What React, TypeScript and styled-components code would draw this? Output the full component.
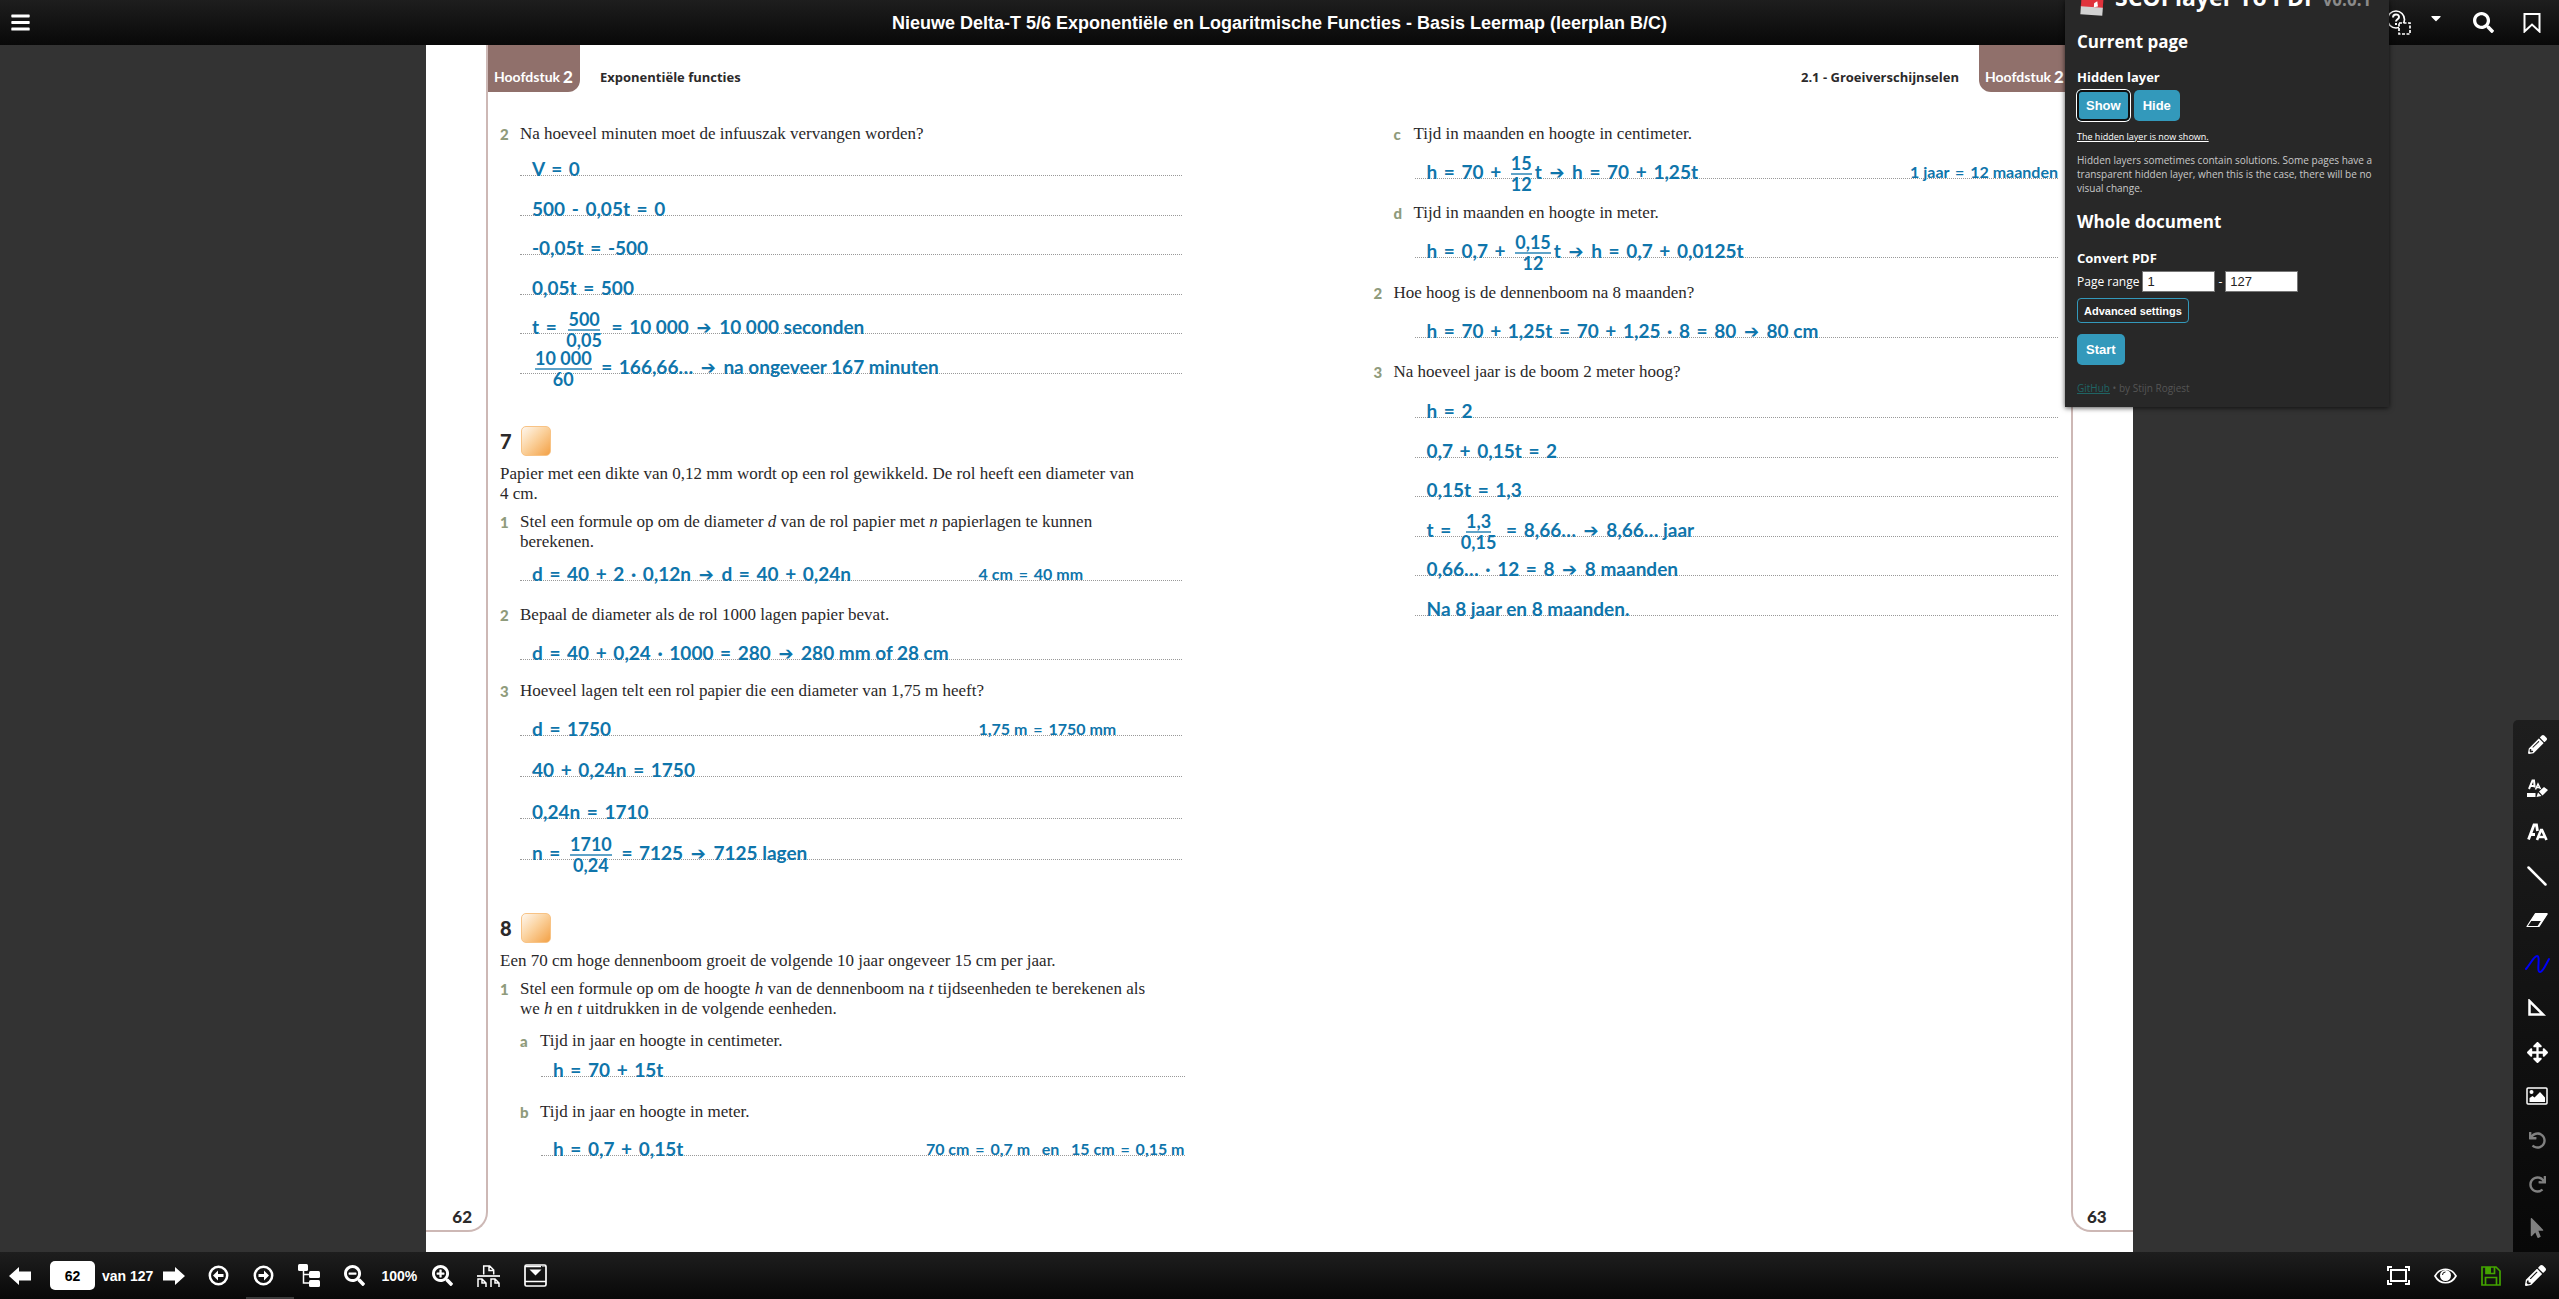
import React from "react";
import styled, { createGlobalStyle } from "styled-components";
import {
  FaArrowsAlt,
  FaBars,
  FaCaretDown,
  FaMousePointer,
  FaPencilAlt,
  FaRedo,
  FaSearch,
  FaSearchMinus,
  FaSearchPlus,
  FaUndo,
} from "react-icons/fa";

const GlobalStyle = createGlobalStyle`
  *, *::before, *::after { box-sizing: border-box; }
  body { margin: 0; background: #333; font-family: "Liberation Sans", Arial, sans-serif; }
  h1, h2, h3, p { margin: 0; }
`;

const ui = `"Open Sans", "Noto Sans", sans-serif`;
const hand = `Lato, "DejaVu Sans", sans-serif`;
const book = `"Liberation Serif", "Times New Roman", serif`;

/* ---------- Application shell ---------- */

const Shell = styled.div`
  display: flex;
  flex-direction: column;
  min-height: 100vh;
  position: relative;
  overflow: hidden;
`;

const TopBar = styled.header`
  display: grid;
  grid-template-columns: 1fr auto 1fr;
  align-items: center;
  height: 45px;
  background: linear-gradient(#1e1e1e, #080808);
  color: #fff;
`;

const Title = styled.h1`
  font-size: 18px;
  line-height: 20px;
  font-weight: 700;
`;

const Cluster = styled.div<{ $gap: number }>`
  display: flex;
  align-items: center;
  gap: ${(p) => p.$gap}px;
`;

const MenuCluster = styled(Cluster)`
  padding-left: 10px;
`;

const ToolCluster = styled(Cluster)`
  justify-content: flex-end;
  padding-right: 18px;
`;

const IconButton = styled.button<{ $color?: string }>`
  display: inline-flex;
  align-items: center;
  justify-content: center;
  padding: 0;
  border: 0;
  background: none;
  color: ${(p) => p.$color || "#fff"};
`;

const CaretButton = styled(IconButton)`
  padding-bottom: 10px;
`;

const Stage = styled.main`
  flex: 1;
  display: flex;
  justify-content: center;
  position: relative;
`;

const Spread = styled.div`
  display: flex;
  width: 67%;
  max-width: 1707px;
  background: #fff;
`;

/* ---------- Book pages ---------- */

const Page = styled.section`
  flex: 1;
  display: flex;
  min-width: 0;
  padding-bottom: 20px;
`;

const Margin = styled.div<{ $side: "left" | "right" }>`
  display: flex;
  align-items: flex-end;
  width: 62px;
  flex: none;
  padding: 0 14px 3px;
  justify-content: ${(p) => (p.$side === "left" ? "flex-end" : "flex-start")};
  border: 0 solid #cdb8b5;
  border-bottom-width: 2px;
  ${(p) =>
    p.$side === "left"
      ? "border-right-width: 2px; border-bottom-right-radius: 20px;"
      : "border-left-width: 2px; border-bottom-left-radius: 20px;"}
  font: 900 17px/20px ${hand};
  color: #2c2a2b;
`;

const Column = styled.div`
  flex: 1;
  min-width: 0;
`;

const PageHead = styled.div<{ $end?: boolean }>`
  display: flex;
  align-items: flex-end;
  height: 47px;
  gap: 20px;
  justify-content: ${(p) => (p.$end ? "flex-end" : "flex-start")};
  color: #2c2a2b;
`;

const HeadTitle = styled.h2`
  font: 700 13px/20px ${ui};
  padding-bottom: 5px;
`;

const ChapterTab = styled.div<{ $side: "left" | "right" }>`
  display: flex;
  align-items: flex-end;
  gap: 3px;
  width: 92px;
  height: 47px;
  padding: 0 6px 5px;
  background: #90706b;
  color: #fff;
  font: 700 14px/20px ${hand};
  white-space: nowrap;
  border-radius: ${(p) => (p.$side === "left" ? "0 0 12px 0" : "0 0 0 12px")};
`;

const ChapterNumber = styled.span`
  font-size: 17px;
  font-weight: 900;
`;

const LeftBody = styled.div`
  display: flex;
  flex-direction: column;
  padding: 0 98px 0 12px;
`;

const RightBody = styled.div`
  display: flex;
  flex-direction: column;
  padding: 0 13px 0 94px;
`;

const Paragraph = styled.p<{ $top: number }>`
  margin-top: ${(p) => p.$top}px;
  font: 400 17px/20px ${book};
  color: #2a2829;
  white-space: pre-line;
`;

const Row = styled.div<{ $top: number; $indent?: number }>`
  display: flex;
  margin-top: ${(p) => p.$top}px;
  padding-left: ${(p) => p.$indent || 0}px;
`;

const Marker = styled.span`
  width: 20px;
  flex: none;
  font: 900 15px/20px ${hand};
  color: #8f9b7c;
`;

const ExerciseHead = styled.div<{ $top: number }>`
  display: flex;
  align-items: center;
  gap: 9px;
  height: 30px;
  margin-top: ${(p) => p.$top}px;
  font: 900 20px/30px ${hand};
  color: #2c2a2b;
`;

const Level = styled.span`
  width: 30px;
  height: 30px;
  border: 1px solid #f8c385;
  border-radius: 5px;
  background: linear-gradient(135deg, #fef3e6 5%, #fbd3a0 45%, #f3a146 100%);
`;

const Answers = styled.div<{ $top: number; $height?: number; $indent: number; $wide?: boolean }>`
  display: flex;
  flex-direction: column;
  justify-content: space-between;
  height: ${(p) => p.$height || 20}px;
  margin: ${(p) => p.$top}px ${(p) => (p.$wide ? -3 : 0)}px 0 ${(p) => p.$indent}px;
`;

const Line = styled.div`
  display: flex;
  justify-content: space-between;
  height: 20px;
  padding: 3px 0 0 12px;
  border-bottom: 1px dotted #999;
  font: 700 19px/20px ${hand};
  color: #0f75ab;
  white-space: nowrap;
`;

const Expression = styled.span`
  height: 20px;
`;

const Note = styled.span<{ $width?: number }>`
  width: ${(p) => (p.$width ? p.$width + "px" : "auto")};
  height: 20px;
  font-size: 16px;
`;

const Operator = styled.span`
  margin: 0 2px;
`;

const Arrow = styled.span`
  margin: 0 3px;
  font: 700 18px/16px "DejaVu Sans", sans-serif;
`;

const Fraction = styled.span`
  display: inline-flex;
  flex-direction: column;
  align-items: center;
  vertical-align: middle;
  margin: -11px 3px;
  font-size: 18px;
`;

const Numerator = styled.span`
  line-height: 19px;
  border-bottom: 2px solid #5fa3c8;
`;

const Denominator = styled.span`
  line-height: 19px;
`;

/* Writes out a formula; {a/b} is a stacked fraction. */
function Formula({ text }: { text: string }) {
  const parts = text.split(/(\{[^}]+\}|[=+·→]| - )/);
  return (
    <>
      {parts.map((part, i) => {
        if (part.startsWith("{")) {
          const [top, bottom] = part.slice(1, -1).split("/");
          return (
            <Fraction key={i}>
              <Numerator>{top}</Numerator>
              <Denominator>{bottom}</Denominator>
            </Fraction>
          );
        }
        if (part === "→") return <Arrow key={i}>➔</Arrow>;
        if (/^([=+·]| - )$/.test(part)) return <Operator key={i}>{part}</Operator>;
        return part;
      })}
    </>
  );
}

type AnswerLine = { text: string; note?: string; noteWidth?: number };

function AnswerBlock(props: {
  top: number;
  indent: number;
  height?: number;
  wide?: boolean;
  lines: AnswerLine[];
}) {
  return (
    <Answers $top={props.top} $indent={props.indent} $height={props.height} $wide={props.wide}>
      {props.lines.map((line) => (
        <Line key={line.text}>
          <Expression>
            <Formula text={line.text} />
          </Expression>
          {line.note && (
            <Note $width={line.noteWidth}>
              <Formula text={line.note} />
            </Note>
          )}
        </Line>
      ))}
    </Answers>
  );
}

function Question(props: { top: number; mark: string; indent?: number; children: React.ReactNode }) {
  return (
    <Row $top={props.top} $indent={props.indent}>
      <Marker>{props.mark}</Marker>
      <Paragraph $top={0}>{props.children}</Paragraph>
    </Row>
  );
}

function LeftPage() {
  return (
    <Page>
      <Margin $side="left">62</Margin>
      <Column>
        <PageHead>
          <ChapterTab $side="left">
            Hoofdstuk <ChapterNumber>2</ChapterNumber>
          </ChapterTab>
          <HeadTitle>Exponentiële functies</HeadTitle>
        </PageHead>
        <LeftBody>
          <Question top={32} mark="2">
            Na hoeveel minuten moet de infuuszak vervangen worden?
          </Question>
          <AnswerBlock
            top={12}
            indent={20}
            height={218}
            lines={[
              { text: "V = 0" },
              { text: "500 - 0,05t = 0" },
              { text: "-0,05t = -500" },
              { text: "0,05t = 500" },
              { text: "t = {500/0,05} = 10 000 → 10 000 seconden" },
              { text: "{10 000/60} = 166,66… → na ongeveer 167 minuten" },
            ]}
          />
          <ExerciseHead $top={52}>
            7 <Level />
          </ExerciseHead>
          <Paragraph $top={8}>
            {"Papier met een dikte van 0,12 mm wordt op een rol gewikkeld. De rol heeft een diameter van\n4 cm."}
          </Paragraph>
          <Question top={8} mark="1">
            Stel een formule op om de diameter <i>d</i> van de rol papier met <i>n</i> papierlagen te kunnen
            {"\n"}berekenen.
          </Question>
          <AnswerBlock
            top={9}
            indent={20}
            lines={[{ text: "d = 40 + 2 · 0,12n → d = 40 + 0,24n", note: "4 cm = 40 mm", noteWidth: 203 }]}
          />
          <Question top={24} mark="2">
            Bepaal de diameter als de rol 1000 lagen papier bevat.
          </Question>
          <AnswerBlock
            top={15}
            indent={20}
            lines={[{ text: "d = 40 + 0,24 · 1000 = 280 → 280 mm of 28 cm" }]}
          />
          <Question top={21} mark="3">
            Hoeveel lagen telt een rol papier die een diameter van 1,75 m heeft?
          </Question>
          <AnswerBlock
            top={15}
            indent={20}
            height={144}
            lines={[
              { text: "d = 1750", note: "1,75 m = 1750 mm", noteWidth: 203 },
              { text: "40 + 0,24n = 1750" },
              { text: "0,24n = 1710" },
              { text: "n = {1710/0,24} = 7125 → 7125 lagen" },
            ]}
          />
          <ExerciseHead $top={53}>
            8 <Level />
          </ExerciseHead>
          <Paragraph $top={8}>
            Een 70 cm hoge dennenboom groeit de volgende 10 jaar ongeveer 15 cm per jaar.
          </Paragraph>
          <Question top={8} mark="1">
            Stel een formule op om de hoogte <i>h</i> van de dennenboom na <i>t</i> tijdseenheden te berekenen als
            {"\n"}we <i>h</i> en <i>t</i> uitdrukken in de volgende eenheden.
          </Question>
          <Question top={12} mark="a" indent={20}>
            Tijd in jaar en hoogte in centimeter.
          </Question>
          <AnswerBlock top={6} indent={41} wide lines={[{ text: "h = 70 + 15t" }]} />
          <Question top={25} mark="b" indent={20}>
            Tijd in jaar en hoogte in meter.
          </Question>
          <AnswerBlock
            top={14}
            indent={41}
            wide
            lines={[{ text: "h = 0,7 + 0,15t", note: "70 cm = 0,7 m \u00a0 en \u00a0 15 cm = 0,15 m" }]}
          />
        </LeftBody>
      </Column>
    </Page>
  );
}

function RightPage() {
  return (
    <Page>
      <Column>
        <PageHead $end>
          <HeadTitle>2.1 - Groeiverschijnselen</HeadTitle>
          <ChapterTab $side="right">
            Hoofdstuk <ChapterNumber>2</ChapterNumber>
          </ChapterTab>
        </PageHead>
        <RightBody>
          <Question top={32} mark="c" indent={20}>
            Tijd in maanden en hoogte in centimeter.
          </Question>
          <AnswerBlock
            top={15}
            indent={41}
            lines={[{ text: "h = 70 + {15/12}t → h = 70 + 1,25t", note: "1 jaar = 12 maanden" }]}
          />
          <Question top={24} mark="d" indent={20}>
            Tijd in maanden en hoogte in meter.
          </Question>
          <AnswerBlock top={15} indent={41} lines={[{ text: "h = 0,7 + {0,15/12}t → h = 0,7 + 0,0125t" }]} />
          <Question top={25} mark="2">
            Hoe hoog is de dennenboom na 8 maanden?
          </Question>
          <AnswerBlock
            top={15}
            indent={41}
            lines={[{ text: "h = 70 + 1,25t = 70 + 1,25 · 8 = 80 → 80 cm" }]}
          />
          <Question top={24} mark="3">
            Na hoeveel jaar is de boom 2 meter hoog?
          </Question>
          <AnswerBlock
            top={16}
            indent={41}
            height={218}
            lines={[
              { text: "h = 2" },
              { text: "0,7 + 0,15t = 2" },
              { text: "0,15t = 1,3" },
              { text: "t = {1,3/0,15} = 8,66… → 8,66… jaar" },
              { text: "0,66… · 12 = 8 → 8 maanden" },
              { text: "Na 8 jaar en 8 maanden." },
            ]}
          />
        </RightBody>
      </Column>
      <Margin $side="right">63</Margin>
    </Page>
  );
}

/* ---------- Extension popup ---------- */

const Popup = styled.aside`
  position: absolute;
  top: 0;
  right: 170px;
  z-index: 3;
  display: flex;
  flex-direction: column;
  align-items: flex-start;
  width: 324px;
  padding: 0 12px 10px;
  overflow: hidden;
  background: #282828;
  color: #fff;
  font-family: ${ui};
  box-shadow: 0 1px 5px rgba(0, 0, 0, 0.7);
`;

const PopupTitle = styled.h2`
  display: flex;
  align-items: baseline;
  margin-top: -20px;
  font-size: 23px;
  line-height: 34px;
  white-space: nowrap;
`;

const Version = styled.span`
  margin-left: 6px;
  font-size: 17px;
  color: #8a8a8a;
`;

const LogoBox = styled.span`
  display: flex;
  width: 38px;
  padding-left: 3px;
  align-self: flex-end;
`;

const PopupHeading = styled.h2<{ $top: number }>`
  margin-top: ${(p) => p.$top}px;
  font-size: 17px;
  line-height: 24px;
`;

const PopupSubheading = styled.h3<{ $top: number }>`
  margin-top: ${(p) => p.$top}px;
  font-size: 13px;
  line-height: 18px;
`;

const PopupRow = styled.div<{ $top: number }>`
  display: flex;
  align-items: center;
  gap: 3px;
  margin-top: ${(p) => p.$top}px;
  font-size: 12px;
`;

const ActionButton = styled.button<{ $focus?: boolean }>`
  height: 31px;
  padding: 0 9px;
  border: 0;
  border-radius: 5px;
  background: #3399bb;
  color: #fff;
  font: 700 13px/16px "Liberation Sans", Arial, sans-serif;
  ${(p) => p.$focus && "box-shadow: inset 0 0 0 2px #101010, 0 0 0 1px #fff; margin-right: 1px;"}
`;

const Status = styled.p`
  margin-top: 9px;
  font-size: 9px;
  line-height: 14px;
  text-decoration: underline;
`;

const Hint = styled.p`
  margin-top: 9px;
  font-size: 10px;
  line-height: 14px;
  color: #c8c8c8;
  white-space: pre;
`;

const RangeInput = styled.input`
  width: 73px;
  height: 21px;
  padding: 0 4px;
  border: 1px solid #767676;
  background: #fff;
  color: #222;
  font: 400 13px/16px "Liberation Sans", Arial, sans-serif;
`;

const OutlineButton = styled.button`
  height: 25px;
  margin-top: 6px;
  padding: 0 6px;
  border: 1px solid #3399bb;
  border-radius: 4px;
  background: none;
  color: #fff;
  font: 700 11px/14px "Liberation Sans", Arial, sans-serif;
`;

const StartButton = styled(ActionButton)`
  margin-top: 11px;
`;

const Credit = styled.p`
  margin-top: 14px;
  font-size: 10px;
  line-height: 18px;
  color: #555;
`;

const CreditLink = styled.a`
  color: #1f6464;
`;

function ExtensionPopup() {
  return (
    <Popup>
      <PopupTitle>
        <LogoBox>
          <svg width="24" height="24" viewBox="0 0 24 24">
            <g transform="rotate(4 12 12)">
              <rect x="1" y="0" width="22" height="15" fill="#e0333c" />
              <path d="M1 14h22v8H1z" fill="#d2d2d2" />
              <path d="M14 10l3-2 1 5-4 1z" fill="#fff" />
            </g>
          </svg>
        </LogoBox>
        SCOPlayer To PDF <Version>v0.0.1</Version>
      </PopupTitle>
      <PopupHeading $top={13}>Current page</PopupHeading>
      <PopupSubheading $top={14}>Hidden layer</PopupSubheading>
      <PopupRow $top={4}>
        <ActionButton $focus>Show</ActionButton>
        <ActionButton>Hide</ActionButton>
      </PopupRow>
      <Status>The hidden layer is now shown.</Status>
      <Hint>
        {"Hidden layers sometimes contain solutions. Some pages have a\ntransparent hidden layer, when this is the case, there will be no\nvisual change."}
      </Hint>
      <PopupHeading $top={15}>Whole document</PopupHeading>
      <PopupSubheading $top={15}>Convert PDF</PopupSubheading>
      <PopupRow $top={4}>
        <label htmlFor="range-from">Page range</label>
        <RangeInput id="range-from" defaultValue="1" />-
        <RangeInput aria-label="Page range end" defaultValue="127" />
      </PopupRow>
      <OutlineButton>Advanced settings</OutlineButton>
      <StartButton>Start</StartButton>
      <Credit>
        <CreditLink href="#github">GitHub</CreditLink> • by Stijn Rogiest
      </Credit>
    </Popup>
  );
}

/* ---------- Tool sidebar ---------- */

const Sidebar = styled.nav`
  position: absolute;
  right: 0;
  bottom: 0;
  display: flex;
  flex-direction: column;
  width: 46px;
  padding: 2px 0;
  border-top-left-radius: 5px;
  background: linear-gradient(#1e1e1e, #080808);
`;

const Tool = styled(IconButton)`
  height: 44px;
  padding-left: 2px;
`;

const Svg = ({ w, h, children }: { w: number; h: number; children: React.ReactNode }) => (
  <svg width={w} height={h} viewBox={`0 0 ${w} ${h}`} fill="none" stroke="currentColor">
    {children}
  </svg>
);

const LettersIcon = () => (
  <Svg w={21} h={18}>
    <path d="M1.500 16.500L7 2h2.500l1 6M4 11.500h4" strokeWidth="2.800" />
    <path d="M10 17l4-10h1l4.500 10M12 14h5.500" strokeWidth="2.600" />
  </Svg>
);

const MarkerIcon = () => (
  <Svg w={21} h={18}>
    <path d="M2 10L5.500 1.500h1.500l.7 7M3.500 7h4" strokeWidth="2" />
    <path d="M8.500 10.500L11 5l2.500 5M9.500 8.500h3" strokeWidth="1.500" />
    <path d="M0 14h8.500v4H0zM11 13.500l3.500 3.500-5 1zM12 12.500l5-4.500 4 3-5.500 5.500z" fill="currentColor" stroke="none" />
  </Svg>
);

const PictureIcon = () => (
  <Svg w={22} h={18}>
    <rect x="1" y="1" width="20" height="16" rx="1" strokeWidth="1.500" />
    <circle cx="5.500" cy="5" r="2" fill="currentColor" stroke="none" />
    <path d="M3.500 15v-4l3-2 2 1.500L14 5l5 5.500V15z" fill="currentColor" stroke="none" />
  </Svg>
);

const tools: { label: string; icon: React.ReactNode; color?: string }[] = [
  { label: "Potlood", icon: <FaPencilAlt size={19} /> },
  { label: "Tekst markeren", icon: <MarkerIcon /> },
  { label: "Tekst", icon: <LettersIcon /> },
  {
    label: "Lijn",
    icon: (
      <Svg w={20} h={20}>
        <path d="M1.500 1.500l17 17" strokeWidth="2.500" strokeLinecap="round" />
      </Svg>
    ),
  },
  {
    label: "Gom",
    icon: (
      <Svg w={22} h={16}>
        <path d="M9.500 1.500H21L12.500 14.500H1z" strokeWidth="1.200" strokeLinejoin="round" />
        <path d="M9.500 1.500H21L16 9H4.500z" fill="currentColor" stroke="none" />
        <path d="M12.500 14.500L21 1.500" strokeWidth="2" />
      </Svg>
    ),
  },
  {
    label: "Vrije lijn",
    color: "#0000f5",
    icon: (
      <Svg w={26} h={20}>
        <path d="M2 15C7 9 10 2 13 2c4 0-1 16 3 16 3 0 5-6 9-13" strokeWidth="2" strokeLinecap="round" />
      </Svg>
    ),
  },
  {
    label: "Geodriehoek",
    icon: (
      <Svg w={20} h={18}>
        <path d="M2.500 2v13.500h13.500z" strokeWidth="2.500" />
      </Svg>
    ),
  },
  { label: "Verplaatsen", icon: <FaArrowsAlt size={21} /> },
  { label: "Afbeelding", icon: <PictureIcon /> },
  { label: "Ongedaan maken", color: "#808080", icon: <FaUndo size={17} /> },
  { label: "Opnieuw", color: "#808080", icon: <FaRedo size={17} /> },
  { label: "Selecteren", color: "#808080", icon: <FaMousePointer size={20} /> },
];

/* ---------- Bottom bar ---------- */

const BottomBar = styled.footer`
  position: relative;
  display: flex;
  align-items: center;
  justify-content: space-between;
  height: 47px;
  padding: 0 13px 0 9px;
  background: linear-gradient(#1e1e1e, #080808);
  color: #fff;
  font-size: 14px;
  font-weight: 700;
  &::after {
    content: "";
    position: absolute;
    left: 246px;
    bottom: 0;
    width: 48px;
    height: 2px;
    background: #3a3a3a;
  }
`;

const PageInput = styled.input`
  width: 45px;
  height: 29px;
  margin: 0 7px 0 18px;
  padding: 0;
  border: 0;
  border-radius: 5px;
  background: #fff;
  color: #000;
  font: 700 14px/16px "Liberation Sans", Arial, sans-serif;
  text-align: center;
`;

const PageCount = styled.label`
  margin-right: 9px;
`;

const Controls = styled(Cluster)`
  margin-left: 23px;
`;

const Zoom = styled.span`
  width: 35px;
  margin: 0 -8px;
  text-align: center;
`;

const ArrowIcon = ({ flip }: { flip?: boolean }) => (
  <Svg w={23} h={18}>
    <path
      d={flip ? "M23 9L13 0v4.500H1v9h12V18z" : "M0 9L10 0v4.500h12v9H10V18z"}
      fill="currentColor"
      stroke="none"
    />
  </Svg>
);

const CircleArrow = ({ flip }: { flip?: boolean }) => (
  <Svg w={21} h={21}>
    <circle cx="10.500" cy="10.500" r="8.700" strokeWidth="2.500" />
    <path
      d={
        flip
          ? "M16 10.500L11 5.500v3.500H5.500v3H11v3.500z"
          : "M5 10.500L10 5.500v3.500h5.500v3H10v3.500z"
      }
      fill="currentColor"
      stroke="none"
    />
  </Svg>
);

const TreeIcon = () => (
  <Svg w={22} h={23}>
    <path d="M5.500 5v14H13M5.500 10.500H13" strokeWidth="1.500" />
    <g fill="currentColor" stroke="none">
      <rect x="0" y="0" width="10" height="7" rx="1.500" />
      <rect x="11" y="7" width="11" height="7" rx="1.500" />
      <rect x="11" y="16" width="11" height="7" rx="1.500" />
    </g>
  </Svg>
);

const PagesIcon = () => (
  <Svg w={23} h={22}>
    <path d="M0 11h23" strokeWidth="1.700" />
    <path
      d="M6.700 9.500V1h6l4 4v4.500M12 1v4.500h4.500M1 22v-8h4l4 4v4M5 14v4h4M14 22v-8h4l4 4v4M18 14v4h4"
      strokeWidth="1.500"
    />
  </Svg>
);

const PanelIcon = () => (
  <Svg w={23} h={23}>
    <rect x="1" y="1" width="21" height="21" rx="1.500" strokeWidth="1.700" />
    <path d="M1 2.500h16M1 17.500h21" strokeWidth="1.500" />
    <path d="M18.500 2.500h3" strokeWidth="1" strokeDasharray="1 1" />
    <path d="M5.500 5.500h12l-6 6z" fill="currentColor" stroke="none" />
  </Svg>
);

const FrameIcon = () => (
  <Svg w={23} h={19}>
    <rect x="4" y="4" width="15" height="11" strokeWidth="2" />
    <path d="M1 5V1h4M18 1h4v4M22 14v4h-4M5 18H1v-4" strokeWidth="2" />
  </Svg>
);

const EyeIcon = () => (
  <Svg w={23} h={16}>
    <path d="M1 8c5-9 16-9 21 0-5 9-16 9-21 0z" strokeWidth="1.700" />
    <circle cx="11.500" cy="7.500" r="5.500" fill="currentColor" stroke="none" />
    <path d="M8.500 7a3 3 0 0 1 3-3" stroke="#111" strokeWidth="1" />
  </Svg>
);

const SaveIcon = () => (
  <Svg w={20} h={20}>
    <path d="M1 1h14l4 4v14H1zM4.500 19v-7.500h11V19M5 1v6.500h8.500V1" strokeWidth="1.700" />
    <path d="M5 1h5v6H5z" fill="currentColor" stroke="none" />
  </Svg>
);

const HelpIcon = () => (
  <Svg w={26} h={26}>
    <circle cx="10" cy="9.500" r="8.500" strokeWidth="1.700" />
    <path d="M7 7.500c0-4 6-4 6-.5 0 2.500-3 2-3 4.500" strokeWidth="2" />
    <path d="M10 13v2" strokeWidth="2" />
    <rect x="13" y="13" width="11" height="11" fill="#111" strokeWidth="1.700" strokeDasharray="3 1.500" />
  </Svg>
);

const BookmarkIcon = () => (
  <Svg w={18} h={20}>
    <path d="M1.500 1h15v17.500L9 11.500l-7.500 7z" strokeWidth="2" />
  </Svg>
);

export default function App() {
  return (
    <>
      <GlobalStyle />
      <Shell>
        <TopBar>
          <MenuCluster $gap={0}>
            <IconButton aria-label="Menu">
              <FaBars size={21} />
            </IconButton>
          </MenuCluster>
          <Title>Nieuwe Delta-T 5/6 Exponentiële en Logaritmische Functies - Basis Leermap (leerplan B/C)</Title>
          <ToolCluster $gap={29}>
            <Cluster $gap={16}>
              <IconButton aria-label="Help">
                <HelpIcon />
              </IconButton>
              <CaretButton aria-label="Meer">
                <FaCaretDown size={16} />
              </CaretButton>
            </Cluster>
            <IconButton aria-label="Zoeken">
              <FaSearch size={21} />
            </IconButton>
            <IconButton aria-label="Bladwijzer">
              <BookmarkIcon />
            </IconButton>
          </ToolCluster>
        </TopBar>

        <Stage>
          <Spread>
            <LeftPage />
            <RightPage />
          </Spread>
          <Sidebar>
            {tools.map((tool) => (
              <Tool key={tool.label} aria-label={tool.label} $color={tool.color}>
                {tool.icon}
              </Tool>
            ))}
          </Sidebar>
        </Stage>

        <BottomBar>
          <Cluster $gap={0}>
            <IconButton aria-label="Vorige pagina">
              <ArrowIcon />
            </IconButton>
            <PageInput id="page" defaultValue="62" />
            <PageCount htmlFor="page">van 127</PageCount>
            <IconButton aria-label="Volgende pagina">
              <ArrowIcon flip />
            </IconButton>
            <Controls $gap={24}>
              <IconButton aria-label="Terug">
                <CircleArrow />
              </IconButton>
              <IconButton aria-label="Vooruit">
                <CircleArrow flip />
              </IconButton>
              <IconButton aria-label="Inhoud">
                <TreeIcon />
              </IconButton>
              <IconButton aria-label="Uitzoomen">
                <FaSearchMinus size={21} />
              </IconButton>
              <Zoom>100%</Zoom>
              <IconButton aria-label="Inzoomen">
                <FaSearchPlus size={21} />
              </IconButton>
              <IconButton aria-label="Paginaweergave">
                <PagesIcon />
              </IconButton>
              <IconButton aria-label="Balk verbergen">
                <PanelIcon />
              </IconButton>
            </Controls>
          </Cluster>
          <Cluster $gap={24}>
            <IconButton aria-label="Volledig scherm">
              <FrameIcon />
            </IconButton>
            <IconButton aria-label="Tonen">
              <EyeIcon />
            </IconButton>
            <IconButton aria-label="Opslaan" $color="#43a400">
              <SaveIcon />
            </IconButton>
            <IconButton aria-label="Tekenen">
              <FaPencilAlt size={21} />
            </IconButton>
          </Cluster>
        </BottomBar>

        <ExtensionPopup />
      </Shell>
    </>
  );
}
